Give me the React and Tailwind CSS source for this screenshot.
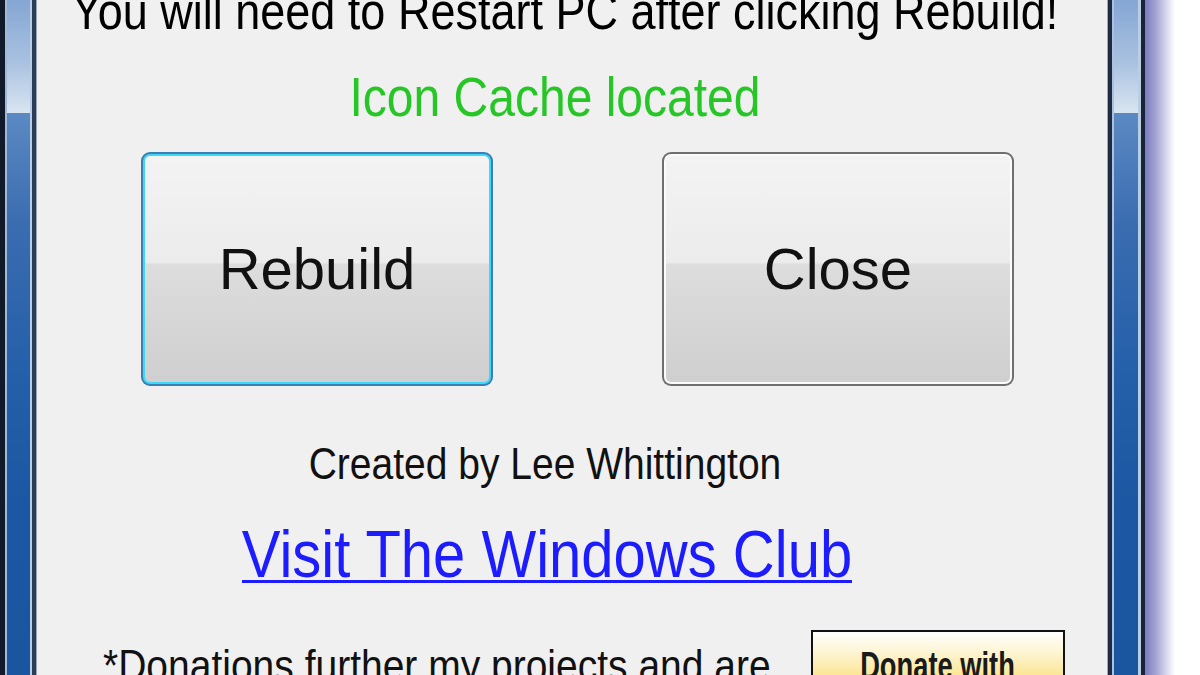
import React from 'react'

const font = { fontFamily: '"Liberation Sans", Arial, sans-serif' }

// Aero glass strip used on both sides of the window frame
const Glass = ({ w }) => (
  <div className={`flex flex-col ${w}`}>
    <div className="h-[113px] bg-[linear-gradient(to_bottom,#84a6d3_0%,#a9c1e0_55%,#d9e5f1_100%)]" />
    <div className="flex-1 bg-[linear-gradient(to_bottom,#5b89c3_0%,#3a6cb0_20%,#2560aa_45%,#1b57a2_70%,#1a55a0_100%)]" />
  </div>
)

const Stretch = ({ className = '', children }) => (
  <span className={`inline-block scale-y-[1.15] ${className}`}>{children}</span>
)

const BigButton = ({ focused, children }) => (
  <div
    className={`w-[352px] h-[234px] rounded-[9px] p-[2px] ${
      focused ? 'bg-[#3b7fb3]' : 'bg-[#6f6f6f]'
    }`}
  >
    <div
      className={`h-full w-full rounded-[7px] p-[2px] ${
        focused ? 'bg-[#3fd8f8]' : 'bg-[#fbfbfb]'
      }`}
    >
      <div className="h-full w-full rounded-[5px] flex items-center justify-center bg-[linear-gradient(to_bottom,#f3f3f3_0%,#ececec_47%,#dddddd_48%,#cfcfcf_100%)]">
        <span className="text-[58px] leading-none text-[#111]">{children}</span>
      </div>
    </div>
  </div>
)

export default function App() {
  return (
    <div className="flex h-[675px] w-[1200px] overflow-hidden bg-white" style={font}>
      {/* left frame */}
      <div className="flex w-[37px]">
        <div className="w-[5px] bg-[#111a2a]" />
        <div className="w-[2px] bg-[#a3b9d2]" />
        <Glass w="w-[23px]" />
        <div className="w-[2px] bg-[#b9cde3]" />
        <div className="w-[4px] bg-[#2b3c58]" />
        <div className="w-[1px] bg-[#9aa4b0]" />
      </div>

      {/* dialog body */}
      <div className="w-[1070px] bg-[#f0f0f0] flex flex-col items-center">
        <div className="mt-[-11px] mr-[14px] text-[45px] leading-none text-black whitespace-nowrap">
          <Stretch>You will need to Restart PC after clicking Rebuild!</Stretch>
        </div>

        <div className="mt-[40px] mr-[34px] text-[48px] leading-none text-[#26c626] whitespace-nowrap">
          <Stretch>Icon Cache located</Stretch>
        </div>

        <div className="mt-[30px] self-start pl-[104px] flex gap-[169px]">
          <BigButton focused>Rebuild</BigButton>
          <BigButton>Close</BigButton>
        </div>

        <div className="mt-[58px] mr-[54px] text-[39px] leading-none text-[#111] whitespace-nowrap">
          <Stretch>Created by Lee Whittington</Stretch>
        </div>

        <div className="mt-[45px] mr-[50px] flex text-[58px] leading-none whitespace-nowrap">
          <a href="#" className="block leading-[52px] text-[#1c1cff] no-underline border-b-[3px] border-[#1c1cff]">
            <Stretch>Visit The Windows Club</Stretch>
          </a>
        </div>

        <div className="mt-[47px] self-start pl-[66px] flex items-start">
          <div className="mt-[16px] text-[39px] leading-none text-[#111] whitespace-nowrap">
            <Stretch>*Donations further my projects and are</Stretch>
          </div>
          <div className="ml-[40px] w-[254px] h-[80px] border-2 border-[#111] bg-[linear-gradient(to_bottom,#ffffff_0%,#fdf3cc_30%,#fbe07a_70%,#f8cf3c_100%)] flex justify-center">
            <span className="mt-[14px] inline-block text-[39px] leading-none font-bold text-[#1a1a1a] scale-x-[0.7] whitespace-nowrap">
              Donate with
            </span>
          </div>
        </div>
      </div>

      {/* right frame */}
      <div className="flex w-[38px]">
        <div className="w-[1px] bg-[#a0a8b4]" />
        <div className="w-[4px] bg-[#1e2b42]" />
        <div className="w-[2px] bg-[#aac2dd]" />
        <Glass w="w-[24px]" />
        <div className="w-[3px] bg-[#b9cde3]" />
        <div className="w-[4px] bg-[#1a2438]" />
      </div>
      <div className="w-[30px] bg-[linear-gradient(to_right,#7b7bbf_0%,#a9a9d6_40%,#e4e4f3_80%,#ffffff_100%)]" />
      <div className="flex-1 bg-white" />
    </div>
  )
}
